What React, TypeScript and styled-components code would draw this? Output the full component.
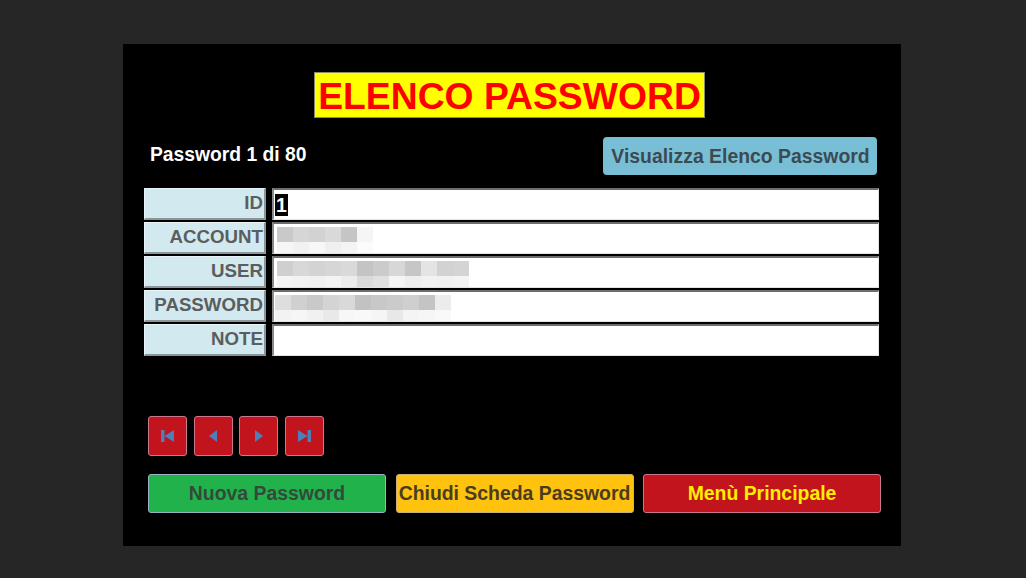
import styled, { createGlobalStyle } from 'styled-components'

const GlobalStyle = createGlobalStyle`
  html, body {
    margin: 0;
    padding: 0;
    background: #262626;
    font-family: "Liberation Sans", Arial, sans-serif;
  }
`

const Page = styled.div`
  width: 1026px;
  height: 578px;
  padding: 44px 0 0 123px;
  box-sizing: border-box;
`

const Panel = styled.section`
  width: 778px;
  height: 502px;
  background: #000;
  box-sizing: border-box;
  padding: 28px 21px 0 21px;
  display: flex;
  flex-direction: column;
`

const TitleRow = styled.div`
  display: flex;
  justify-content: center;
  padding-right: 5px;
`

const Title = styled.h1`
  margin: 0;
  height: 46px;
  box-sizing: border-box;
  padding: 1px 3px 0 3px;
  background: #ffff00;
  border: 1px solid #8a8a6a;
  color: #ff0000;
  font-size: 37.3px;
  font-weight: bold;
  line-height: 44px;
  white-space: nowrap;
`

const HeaderRow = styled.div`
  display: flex;
  justify-content: space-between;
  align-items: flex-start;
  margin-top: 19px;
  padding: 0 3px 0 6px;
`

const Counter = styled.div`
  color: #fff;
  font-size: 19.3px;
  font-weight: bold;
  padding-top: 7px;
`

const ViewButton = styled.button`
  width: 274px;
  height: 38px;
  padding: 0 0 0 1px;
  background: #78bfd6;
  border: none;
  border-radius: 4px;
  color: #3c4a52;
  font-family: inherit;
  font-size: 19.4px;
  font-weight: bold;
  white-space: nowrap;
`

const Grid = styled.div`
  margin-top: 13px;
  display: grid;
  grid-template-columns: 122px 607px;
  grid-auto-rows: 32px;
  column-gap: 6px;
  row-gap: 2px;
`

const Label = styled.div`
  box-sizing: border-box;
  background: #d1e9ef;
  border-top: 1px solid #e8f4f7;
  border-left: 1px solid #e8f4f7;
  border-right: 2px solid #8a9699;
  border-bottom: 2px solid #8a9699;
  color: #5b5d5e;
  font-size: 18.7px;
  font-weight: bold;
  text-align: right;
  padding-right: 1px;
  line-height: 28px;
`

const Field = styled.div`
  box-sizing: border-box;
  background: #fff;
  border-top: 2px solid #6e6e6e;
  border-left: 2px solid #8a8a8a;
  border-right: 1px solid #e2e2e2;
  border-bottom: 1px solid #e2e2e2;
  display: flex;
  align-items: center;
  padding-left: 1px;
`

const Selected = styled.span`
  background: #000;
  color: #fff;
  font-size: 19.4px;
  font-weight: bold;
  line-height: 22px;
  padding: 0 1px;
`

const Mosaic = styled.div<{ $offset: number }>`
  display: grid;
  grid-auto-flow: column;
  grid-template-rows: 15px 11px;
  grid-auto-columns: 16px;
  margin-left: ${p => p.$offset}px;
  margin-top: 2px;
`

const Tile = styled.span<{ $shade: string }>`
  background: ${p => p.$shade};
`

const NavRow = styled.div`
  display: flex;
  gap: 6.5px;
  margin-top: 60px;
  padding-left: 4px;
`

const NavButton = styled.button`
  width: 39px;
  height: 40px;
  padding: 0;
  background: #c1141d;
  border: 1px solid #c8788f;
  border-radius: 3px;
  display: flex;
  align-items: center;
  justify-content: center;
`

const ActionRow = styled.div`
  display: grid;
  grid-template-columns: 238px 238px 238px;
  column-gap: 9.5px;
  margin-top: 18px;
  padding-left: 4px;
`

const ActionButton = styled.button<{ $bg: string; $fg: string; $edge: string }>`
  height: 39px;
  padding: 0;
  background: ${p => p.$bg};
  color: ${p => p.$fg};
  border: 1px solid ${p => p.$edge};
  border-radius: 3px;
  font-family: inherit;
  font-size: 19.4px;
  font-weight: bold;
  white-space: nowrap;
`

const accountTiles = [
  '#c9c9c9', '#f6f6f6', '#d6d6d6', '#f1f1f1', '#d2d2d2', '#f7f7f7',
  '#d9d9d9', '#efefef', '#c5c5c5', '#f4f4f4', '#f5f5f5', '#fbfbfb',
]

const userTiles = [
  '#cfcfcf', '#f4f4f4', '#d8d8d8', '#f2f2f2', '#d3d3d3', '#f0f0f0',
  '#d6d6d6', '#f3f3f3', '#d9d9d9', '#ececec', '#c4c4c4', '#dadada',
  '#cbcbcb', '#e0e0e0', '#d7d7d7', '#f4f4f4', '#c6c6c6', '#eeeeee',
  '#e4e4e4', '#f2f2f2', '#d2d2d2', '#f1f1f1', '#d4d4d4', '#f3f3f3',
]

const passTiles = [
  '#dedede', '#f2f2f2', '#d0d0d0', '#f6f6f6', '#c9c9c9', '#f1f1f1',
  '#d4d4d4', '#e9e9e9', '#d9d9d9', '#f7f7f7', '#c2c2c2', '#f9f9f9',
  '#c8c8c8', '#f5f5f5', '#cbcbcb', '#e8e8e8', '#cfcfcf', '#f4f4f4',
  '#c4c4c4', '#f6f6f6', '#ececec', '#f9f9f9',
]

function Blur({ tiles, offset }: { tiles: string[]; offset: number }) {
  return (
    <Mosaic $offset={offset}>
      {tiles.map((c, i) => <Tile key={i} $shade={c} />)}
    </Mosaic>
  )
}

const iconColor = '#4f7fba'

function NavIcon({ kind }: { kind: 'first' | 'prev' | 'next' | 'last' }) {
  return (
    <svg width="15" height="14" viewBox="0 0 15 14">
      {kind === 'first' && (
        <>
          <rect x="1" y="1" width="3.5" height="12" fill={iconColor} />
          <polygon points="14,1 14,13 4.5,7" fill={iconColor} />
        </>
      )}
      {kind === 'prev' && <polygon points="11,1 11,13 3,7" fill={iconColor} />}
      {kind === 'next' && <polygon points="4,1 4,13 12,7" fill={iconColor} />}
      {kind === 'last' && (
        <>
          <polygon points="1,1 1,13 10.5,7" fill={iconColor} />
          <rect x="10.5" y="1" width="3.5" height="12" fill={iconColor} />
        </>
      )}
    </svg>
  )
}

export default function App() {
  return (
    <>
      <GlobalStyle />
      <Page>
        <Panel>
          <TitleRow>
            <Title>ELENCO PASSWORD</Title>
          </TitleRow>

          <HeaderRow>
            <Counter>Password 1 di 80</Counter>
            <ViewButton>Visualizza Elenco Password</ViewButton>
          </HeaderRow>

          <Grid>
            <Label>ID</Label>
            <Field><Selected>1</Selected></Field>

            <Label>ACCOUNT</Label>
            <Field><Blur tiles={accountTiles} offset={2} /></Field>

            <Label>USER</Label>
            <Field><Blur tiles={userTiles} offset={2} /></Field>

            <Label>PASSWORD</Label>
            <Field><Blur tiles={passTiles} offset={0} /></Field>

            <Label>NOTE</Label>
            <Field />
          </Grid>

          <NavRow>
            <NavButton><NavIcon kind="first" /></NavButton>
            <NavButton><NavIcon kind="prev" /></NavButton>
            <NavButton><NavIcon kind="next" /></NavButton>
            <NavButton><NavIcon kind="last" /></NavButton>
          </NavRow>

          <ActionRow>
            <ActionButton $bg="#22b24c" $fg="#33493b" $edge="#9ab4c4">Nuova Password</ActionButton>
            <ActionButton $bg="#ffc20e" $fg="#4a3d1f" $edge="#c8b07a">Chiudi Scheda Password</ActionButton>
            <ActionButton $bg="#c1141d" $fg="#ffee00" $edge="#c8788f">Menù Principale</ActionButton>
          </ActionRow>
        </Panel>
      </Page>
    </>
  )
}
